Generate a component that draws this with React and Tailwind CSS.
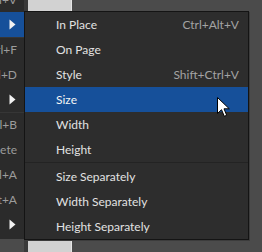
import React from 'react';

const font = { fontFamily: 'Lato, "Liberation Sans", sans-serif' };

// parent menu rows, clipped on the left like the real window edge
const parentRows = [
  { label: 'Ctrl+V' },
  { arrow: true, active: true },
  { label: 'Ctrl+F', sep: true },
  { label: 'Ctrl+D' },
  { arrow: true },
  { label: 'Ctrl+B', sep: true },
  { label: 'Delete' },
  { label: 'Ctrl+A' },
  { label: 'Shift+A' },
  { arrow: true },
  { green: true },
];

const items = [
  { label: 'In Place', shortcut: 'Ctrl+Alt+V' },
  { label: 'On Page' },
  { label: 'Style', shortcut: 'Shift+Ctrl+V' },
  { label: 'Size', active: true },
  { label: 'Width' },
  { label: 'Height' },
  { divider: true },
  { label: 'Size Separately' },
  { label: 'Width Separately' },
  { label: 'Height Separately' },
];

function Triangle() {
  return (
    <svg width="7" height="11" viewBox="0 0 7 11" className="block">
      <path d="M0.5 0.5 L6.5 5.5 L0.5 10.5 Z" fill="#f2f2f2" />
    </svg>
  );
}

function Cursor() {
  return (
    <svg width="13" height="21" viewBox="0 0 13 21" className="block">
      <path
        d="M0.5 0.5 L0.5 16.5 L4.5 12.7 L7.3 19.3 L9.7 18.3 L7 11.8 L12.3 11.8 Z"
        fill="#ffffff"
        stroke="#000000"
        strokeWidth="1"
        strokeLinejoin="round"
      />
    </svg>
  );
}

export default function App() {
  return (
    <div className="relative w-[262px] h-[252px] overflow-hidden bg-[#4b4b4b] text-[12px]" style={font}>
      <div className="flex h-full">
        {/* parent menu */}
        <div className="w-[24px] h-full bg-[#2b2b2b] flex flex-col -mt-[13px] overflow-hidden">
          {parentRows.map((r, i) => (
            <div
              key={i}
              className={
                'relative shrink-0 h-[25px] flex items-center justify-end pr-[7px] whitespace-nowrap text-[#9c9c9c] ' +
                (r.active ? 'bg-[#16509a] ' : '') +
                (r.sep ? 'border-t border-[#363636] ' : '')
              }
            >
              {r.arrow && <div className="pr-[1px]"><Triangle /></div>}
              {r.label && <span>{r.label}</span>}
              {r.green && <span className="absolute left-[16px] top-[24px] w-[1px] h-[4px] bg-[#4caf50]" />}
            </div>
          ))}
        </div>
        <div className="w-[4px] h-full bg-[#393939]" />
        <div className="w-[44px] h-full bg-[#d2d2d2] border-r border-[#e6e6e6]" />
        <div className="flex-1 h-full bg-[#4b4b4b]" />
      </div>

      {/* submenu popup */}
      <div className="absolute left-[24px] top-[11px] w-[225px] h-[229px] bg-[#2d2d2d] border border-[#141414] shadow-[1px_1px_0_#3c3c3c] flex flex-col">
        {items.map((it, i) =>
          it.divider ? (
            <div key={i} className="h-[2px] border-t border-[#232323]" />
          ) : (
            <div
              key={i}
              className={
                'h-[25px] shrink-0 flex items-center justify-between pl-[31px] pr-[9px] ' +
                (it.active ? 'bg-[#16509a] text-[#f4f4f4]' : 'text-[#e2e2e2]')
              }
            >
              <span>{it.label}</span>
              {it.shortcut && <span className="text-[#a3a3a3]">{it.shortcut}</span>}
            </div>
          )
        )}
      </div>

      {/* mouse pointer */}
      <div className="absolute left-[217px] top-[97px]">
        <Cursor />
      </div>
    </div>
  );
}
